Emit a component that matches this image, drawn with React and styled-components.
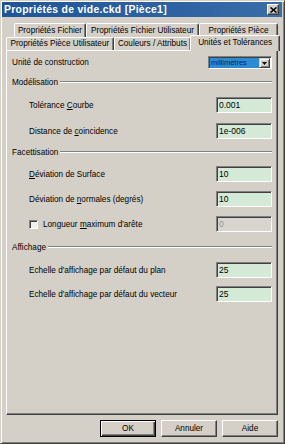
import React from "react";
import styled, { createGlobalStyle } from "styled-components";

const Global = createGlobalStyle`
  html, body { margin: 0; padding: 0; background: #d4d0c8; }
  body { font-family: "Liberation Sans", Arial, sans-serif; font-size: 8.2px; color: #000; }
  * { box-sizing: border-box; }
`;

const Window = styled.div`
  width: 285px;
  height: 444px;
  background: #d4d0c8;
  border: 1px solid;
  border-color: #d4d0c8 #404040 #404040 #d4d0c8;
  box-shadow: inset 1px 1px 0 #fff, inset -1px -1px 0 #808080;
  padding: 1px 2px 2px 1px;
  display: flex;
  flex-direction: column;
`;

const TitleBar = styled.div`
  height: 15px;
  background: linear-gradient(90deg, #1f5596 0%, #2d62a3 60%, #3a6ea8 100%);
  display: flex;
  align-items: center;
  justify-content: space-between;
  padding: 0 3px 0 2px;
`;

const Title = styled.span`
  color: #fff;
  font-weight: bold;
  font-size: 10.4px;
  letter-spacing: 0.3px;
  white-space: nowrap;
`;

const CloseButton = styled.div`
  width: 12px;
  height: 11px;
  background: #d4d0c8;
  border: 1px solid;
  border-color: #fff #404040 #404040 #fff;
  box-shadow: inset -1px -1px 0 #808080;
  display: flex;
  align-items: center;
  justify-content: center;
`;

const Body = styled.div`
  flex: 1;
  display: flex;
  flex-direction: column;
  padding: 6px 4px 0 4px;
`;

const TabRow = styled.div`
  display: flex;
  align-items: flex-end;
  height: ${(p) => p.$h}px;
  padding-left: ${(p) => p.$indent || 0}px;
`;

const Tab = styled.div`
  width: ${(p) => p.$w}px;
  height: 100%;
  background: #d4d0c8;
  border-top: 1px solid #fff;
  border-left: 1px solid #fff;
  border-right: 1px solid #404040;
  box-shadow: inset -1px 0 0 #808080;
  border-radius: 2px 2px 0 0;
  display: flex;
  align-items: center;
  justify-content: center;
  white-space: nowrap;
  padding-bottom: 1px;
`;

const ActiveTab = styled(Tab)`
  position: relative;
  z-index: 1;
  height: 16px;
  margin: -2px -2px -1px -1px;
  padding-bottom: 2px;
`;

const Panel = styled.div`
  flex: 1;
  border: 1px solid;
  border-color: #fff #404040 #404040 #fff;
  box-shadow: inset -1px -1px 0 #808080;
  padding: 5px 5px 0 5px;
  display: flex;
  flex-direction: column;
`;

const UnitRow = styled.div`
  display: flex;
  align-items: center;
  justify-content: space-between;
  height: 13px;
`;

const Select = styled.div`
  width: 64px;
  height: 13px;
  border: 1px solid;
  border-color: #808080 #fff #fff #808080;
  box-shadow: inset 1px 1px 0 #404040;
  background: #fff;
  display: flex;
  padding: 1px 1px 0 1px;
`;

const SelectValue = styled.div`
  flex: 1;
  background: #2b8cd4;
  color: #0b2260;
  font-size: 7.5px;
  line-height: 10px;
  padding-left: 1px;
  white-space: nowrap;
  overflow: hidden;
`;

const SelectButton = styled.div`
  width: 11px;
  height: 10px;
  background: #d4d0c8;
  border: 1px solid;
  border-color: #d4d0c8 #404040 #404040 #d4d0c8;
  box-shadow: inset 1px 1px 0 #fff, inset -1px -1px 0 #808080;
  display: flex;
  align-items: center;
  justify-content: center;
`;

const GroupHeader = styled.div`
  display: flex;
  align-items: center;
  height: 12px;
  margin-top: ${(p) => p.$top}px;
  &::after {
    content: "";
    flex: 1;
    margin-left: 2px;
    border-top: 1px solid #808080;
    border-bottom: 1px solid #fff;
  }
`;

const Fields = styled.div`
  display: flex;
  flex-direction: column;
  gap: ${(p) => p.$gap}px;
  margin-top: ${(p) => p.$top}px;
`;

const Field = styled.div`
  display: flex;
  align-items: center;
  justify-content: space-between;
  height: 16px;
  padding-left: 17px;
`;

const Label = styled.span`
  white-space: nowrap;
`;

const CheckLabel = styled.label`
  display: flex;
  align-items: center;
  gap: 5px;
  white-space: nowrap;
`;

const Input = styled.div`
  width: 56px;
  height: 16px;
  border: 1px solid;
  border-color: #808080 #fff #fff #808080;
  box-shadow: inset 1px 1px 0 #404040;
  background: ${(p) => (p.$disabled ? "#d8d5ce" : "#d4ead6")};
  color: ${(p) => (p.$disabled ? "#9a978f" : "#000")};
  font-size: 8.5px;
  padding: 2px 0 0 2px;
  line-height: 11px;
`;

const Check = styled.span`
  width: 9px;
  height: 9px;
  border: 1px solid;
  border-color: #808080 #fff #fff #808080;
  box-shadow: inset 1px 1px 0 #404040;
  background: #eef2ea;
`;

const Footer = styled.div`
  display: flex;
  justify-content: flex-end;
  gap: 5px;
  padding: 5px 0 4px;
`;

const Button = styled.div`
  width: 56px;
  height: 17px;
  display: flex;
  align-items: center;
  justify-content: center;
  background: #d4d0c8;
  border: 1px solid;
  border-color: ${(p) => (p.$default ? "#000" : "#fff #404040 #404040 #fff")};
  box-shadow: ${(p) =>
    p.$default
      ? "inset 1px 1px 0 #fff, inset -1px -1px 0 #404040, inset -2px -2px 0 #808080"
      : "inset -1px -1px 0 #808080"};
`;

export default function App() {
  return (
    <>
      <Global />
      <Window>
        <TitleBar>
          <Title>Propriétés de vide.ckd [Pièce1]</Title>
          <CloseButton>
            <svg width="7" height="6" viewBox="0 0 7 6">
              <path d="M0.5 0.5 L6.5 5.5 M6.5 0.5 L0.5 5.5" stroke="#000" strokeWidth="1.6" />
            </svg>
          </CloseButton>
        </TitleBar>
        <Body>
          <TabRow $h={14} $indent={8}>
            <Tab $w={72}>Propriétés Fichier</Tab>
            <Tab $w={113}>Propriétés Fichier Utilisateur</Tab>
            <Tab $w={79}>Propriétés Pièce</Tab>
          </TabRow>
          <TabRow $h={13}>
            <Tab $w={108}>Propriétés Pièce Utilisateur</Tab>
            <Tab $w={78}>Couleurs / Attributs</Tab>
            <ActiveTab $w={90}>Unités et Tolérances</ActiveTab>
          </TabRow>
          <Panel>
            <UnitRow>
              <span>Unité de construction</span>
              <Select>
                <SelectValue>millimètres</SelectValue>
                <SelectButton>
                  <svg width="5" height="3" viewBox="0 0 5 3">
                    <path d="M0 0 H5 L2.5 3 Z" fill="#000" />
                  </svg>
                </SelectButton>
              </Select>
            </UnitRow>

            <GroupHeader $top={7}>Modélisation</GroupHeader>
            <Fields $top={9} $gap={10}>
              <Field>
                <Label>Tolérance <u>C</u>ourbe</Label>
                <Input>0.001</Input>
              </Field>
              <Field>
                <Label>Distance de <u>c</u>oincidence</Label>
                <Input>1e-006</Input>
              </Field>
            </Fields>

            <GroupHeader $top={7}>Facettisation</GroupHeader>
            <Fields $top={8} $gap={9}>
              <Field>
                <Label><u>D</u>éviation de Surface</Label>
                <Input>10</Input>
              </Field>
              <Field>
                <Label>Déviation de <u>n</u>ormales (degrés)</Label>
                <Input>10</Input>
              </Field>
              <Field>
                <CheckLabel>
                  <Check />
                  <Label>Longueur <u>m</u>aximum d'arête</Label>
                </CheckLabel>
                <Input $disabled>0</Input>
              </Field>
            </Fields>

            <GroupHeader $top={9}>Affichage</GroupHeader>
            <Fields $top={9} $gap={8}>
              <Field>
                <Label>Echelle d'affichage par défaut du plan</Label>
                <Input>25</Input>
              </Field>
              <Field>
                <Label>Echelle d'affichage par défaut du vecteur</Label>
                <Input>25</Input>
              </Field>
            </Fields>
          </Panel>
          <Footer>
            <Button $default>OK</Button>
            <Button>Annuler</Button>
            <Button>Aide</Button>
          </Footer>
        </Body>
      </Window>
    </>
  );
}
